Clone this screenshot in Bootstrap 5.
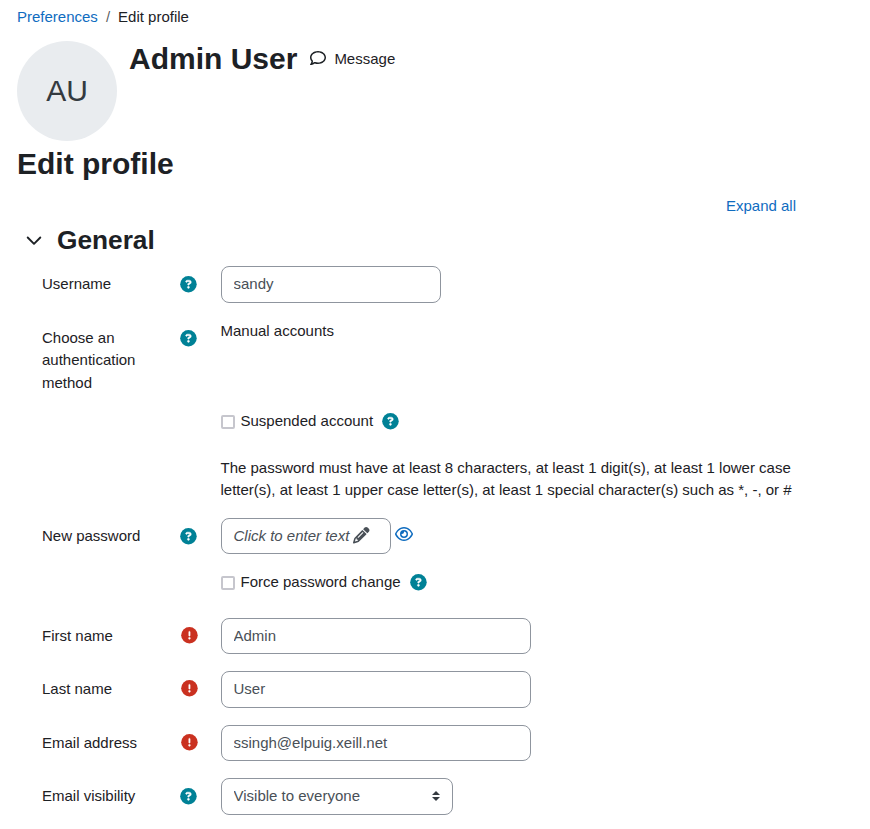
<!DOCTYPE html>
<html lang="en">
<head>
<meta charset="utf-8">
<meta name="viewport" content="width=device-width, initial-scale=1">
<title>Edit profile</title>
<link href="https://cdn.jsdelivr.net/npm/bootstrap@5.3.0/dist/css/bootstrap.min.css" rel="stylesheet">
<style>
body{font-family:"Liberation Sans",Arial,sans-serif;font-size:15px;line-height:1.5;color:#1d2125;overflow:hidden}
.page{padding:5.5px 0 0 17px;width:796px}
a{color:#0f6cbf;text-decoration:none}
.breadcrumb{--bs-breadcrumb-item-active-color:#1d2125;--bs-breadcrumb-font-size:15px;margin-bottom:13px}
.avatar{width:100px;height:100px;background:#e9ecef;color:#343a40;font-size:30px;padding-bottom:2px}
h1,h2,h3{font-weight:700;line-height:1.2;margin:0}
h1,h2{font-size:30px}
h2{padding-top:5px}
h3{font-size:26.25px}
svg{display:block;fill:currentColor;flex:none;overflow:visible}
symbol{overflow:visible}
.expand{padding-top:13px}
.section-head{padding:7px 0 10px 9px}
.section-head h3{padding-left:15px}
.help{color:#008196}
.req{color:#ca3120}
.field{display:flex;margin-bottom:17px;padding-left:25px}
.field-auth{margin-bottom:16px}
.field-suspended{margin-bottom:24px}
.field-rules{margin-bottom:16px}
.field-label{width:178.5px;display:flex;justify-content:space-between;align-items:flex-start;padding:7px 24px 0 0;flex:none}
.field-label span{width:110px}
.field-label svg{margin-top:3px}
.field-label .req{margin-right:-1px;margin-top:2px}
.inline-help{margin-left:9px}
.form-control,.form-select{font-size:15px;color:#495057;border-color:#8f959e;border-radius:8px;padding:6px 12px;height:36.5px}
.form-select{width:232px;background-image:url("data:image/svg+xml,%3csvg xmlns='http://www.w3.org/2000/svg' viewBox='0 0 4 5'%3e%3cpath fill='%23343a40' d='M2 0L0 2h4zm0 5L0 3h4z'/%3e%3c/svg%3e");background-size:8px 10px;background-position:right 12px center}
.snug{padding-top:5px;padding-bottom:7px}
.w-user{width:220px}
.w-name{width:310px}
.w-pass{width:170px}
.pencil{margin:-2px 0 0 4px}
.check{appearance:none;width:14px;height:14px;border:2px solid #c6c6cd;border-radius:2px;margin:2px 6px 0 0;background:#fff}
.msg-icon{margin:-2px 8px 0 1px}
</style>
<script src="https://cdn.jsdelivr.net/npm/bootstrap@5.3.0/dist/js/bootstrap.bundle.min.js"></script>
</head>
<body>
<svg class="d-none" xmlns="http://www.w3.org/2000/svg">
<symbol id="i-help" viewBox="0 0 512 512"><circle cx="262" cy="256" r="256"/><path transform="translate(6)" fill="#fff" stroke="#fff" stroke-width="14" d="M169.800 165.300c7.900-22.300 29.100-37.300 52.800-37.300h58.300c34.900 0 63.100 28.300 63.100 63.100c0 22.600-12.100 43.500-31.700 54.800L280 264.400c-.2 13-10.900 23.600-24 23.600c-13.300 0-24-10.700-24-24V250.500c0-8.600 4.600-16.500 12.100-20.800l44.300-25.400c4.700-2.700 7.600-7.700 7.600-13.100c0-8.400-6.800-15.100-15.100-15.100H222.600c-3.400 0-6.400 2.100-7.500 5.300l-.4 1.200c-4.400 12.500-18.200 19-30.600 14.600s-19-18.200-14.600-30.600zM224 352a32 32 0 1 1 64 0 32 32 0 1 1-64 0z"/></symbol>
<symbol id="i-req" viewBox="0 0 512 512"><circle cx="262" cy="256" r="256"/><path transform="translate(6)" fill="#fff" stroke="#fff" stroke-width="8" d="M256 128c13.300 0 24 10.700 24 24V264c0 13.300-10.700 24-24 24s-24-10.700-24-24V152c0-13.300 10.700-24 24-24zM224 352a32 32 0 1 1 64 0 32 32 0 1 1-64 0z"/></symbol>
</svg>
<main class="page">
  <nav aria-label="breadcrumb"><ol class="breadcrumb">
    <li class="breadcrumb-item"><a href="#">Preferences</a></li>
    <li class="breadcrumb-item active">Edit profile</li>
  </ol></nav>
  <header class="d-flex">
    <div class="avatar rounded-circle d-flex align-items-center justify-content-center">AU</div>
    <div class="d-flex align-items-center align-self-start ms-2 ps-1">
      <h1>Admin User</h1>
      <div class="d-flex align-items-center ms-2 ps-1">
        <svg class="msg-icon" width="16" height="16" viewBox="0 0 512 512"><path d="M123.600 391.300c12.900-9.400 29.600-11.800 44.600-6.400c26.500 9.600 56.200 15.100 87.800 15.100c124.700 0 208-80.500 208-160s-83.300-160-208-160S48 160.500 48 240c0 32 12.400 62.800 35.700 89.200c8.600 9.700 12.800 22.500 11.800 35.500c-1.400 18.100-5.700 34.700-11.300 49.400c17-7.900 31.100-16.700 39.400-22.800zM21.200 431.900c1.800-2.700 3.500-5.400 5.100-8.100c10-16.600 19.500-38.400 21.400-62.900C17.700 326.800 0 285.100 0 240C0 125.100 114.600 32 256 32s256 93.100 256 208s-114.600 208-256 208c-37.100 0-72.300-6.400-104.100-17.900c-11.900 8.700-31.300 20.600-54.300 30.600c-15.100 6.600-32.300 12.600-50.100 16.100c-.8.2-1.600.3-2.400.5c-4.400.8-8.700 1.500-13.200 1.900c-5.100.5-10.900.9-16 .9c-6.500 0-12.300-3.900-14.800-9.900c-2.500-6-1.100-12.800 3.400-17.400c4.100-4.200 7.800-8.700 11.300-13.500c1.700-2.300 3.300-4.600 4.800-6.900z"/></svg>
        <span>Message</span>
      </div>
    </div>
  </header>
  <h2>Edit profile</h2>
  <div class="text-end expand"><a href="#">Expand all</a></div>
  <div class="d-flex align-items-center section-head">
    <svg width="16" height="16" viewBox="0 0 16 16"><path d="M1.700 5.500 8 11.800 14.300 5.500" fill="none" stroke="currentColor" stroke-width="1.900" stroke-linecap="round" stroke-linejoin="round"/></svg>
    <h3>General</h3>
  </div>
  <form>
    <div class="field"><div class="field-label"><span>Username</span><svg class="help" width="16.5" height="16.5"><use href="#i-help"/></svg></div><input class="form-control w-user snug" value="sandy"></div>
    <div class="field field-auth"><div class="field-label"><span>Choose an authentication method</span><svg class="help" width="16.5" height="16.5"><use href="#i-help"/></svg></div><div>Manual accounts</div></div>
    <div class="field field-suspended"><div class="field-label pt-0"></div><label class="d-flex align-items-center"><input type="checkbox" class="check">Suspended account<svg class="help inline-help" width="16.5" height="16.5"><use href="#i-help"/></svg></label></div>
    <div class="field field-rules"><div class="field-label pt-0"></div><div>The password must have at least 8 characters, at least 1 digit(s), at least 1 lower case letter(s), at least 1 upper case letter(s), at least 1 special character(s) such as *, -, or #</div></div>
    <div class="field"><div class="field-label"><span>New password</span><svg class="help" width="16.5" height="16.5"><use href="#i-help"/></svg></div>
      <div class="form-control w-pass d-flex align-items-center"><em class="text-nowrap">Click to enter text</em><svg class="pencil" width="16.500" height="16.500" viewBox="0 0 512 512"><path d="M410.300 231l11.300-11.300-33.900-33.900-62.100-62.100L291.700 89.800l-11.300 11.300-22.600 22.600L58.600 322.900c-10.400 10.400-18 23.300-22.200 37.400L1 480.700c-2.500 8.400-.2 17.500 6.100 23.700s15.300 8.500 23.700 6.100l120.300-35.400c14.100-4.200 27-11.800 37.400-22.200L387.700 253.700zM160 399.400l-9.100 22.700c-4 3.100-8.500 5.400-13.300 6.900L59.400 452l23-78.100c1.400-4.900 3.800-9.400 6.900-13.300l22.700-9.100v32c0 8.800 7.200 16 16 16h32zM362.700 18.700L314.300 67.100l129.900 129.900 48.400-48.400c25-25 25-65.500 0-90.500L453.300 18.700c-25-25-65.500-25-90.500 0zm-47.400 168l-144 144c-6.200 6.200-16.400 6.200-22.600 0s-6.200-16.400 0-22.600l144-144c6.200-6.200 16.400-6.200 22.600 0s6.200 16.400 0 22.600z"/></svg></div>
      <a href="#" class="ms-1 mt-2"><svg width="18" height="16" viewBox="0 0 576 512"><path d="M288 80c-65.200 0-118.800 29.600-159.900 67.700C89.600 183.500 63 226 49.400 256c13.600 30 40.200 72.500 78.600 108.300C169.200 402.400 222.800 432 288 432s118.800-29.600 159.900-67.700C486.400 328.500 513 286 526.600 256c-13.600-30-40.200-72.500-78.600-108.300C406.800 109.600 353.200 80 288 80zM95.400 112.600C142.500 68.800 207.200 32 288 32s145.500 36.800 192.600 80.600c46.800 43.500 78.100 95.400 93 131.100c3.300 7.900 3.300 16.700 0 24.600c-14.900 35.700-46.200 87.700-93 131.100C433.500 443.200 368.800 480 288 480s-145.500-36.800-192.600-80.600C48.600 356 17.300 304 2.500 268.300c-3.300-7.900-3.300-16.700 0-24.600C17.300 208 48.600 156 95.400 112.600zM288 336c44.200 0 80-35.800 80-80s-35.800-80-80-80h-2c1.300 5.100 2 10.500 2 16c0 35.300-28.700 64-64 64c-5.500 0-10.900-.7-16-2v2c0 44.200 35.800 80 80 80zm0-208a128 128 0 1 1 0 256 128 128 0 1 1 0-256z"/></svg></a></div>
    <div class="field mb-4"><div class="field-label pt-0"></div><label class="d-flex align-items-center"><input type="checkbox" class="check">Force password change<svg class="help inline-help" width="16.5" height="16.5"><use href="#i-help"/></svg></label></div>
    <div class="field"><div class="field-label"><span>First name</span><svg class="req" width="16.5" height="16.5"><use href="#i-req"/></svg></div><input class="form-control w-name" value="Admin"></div>
    <div class="field"><div class="field-label"><span>Last name</span><svg class="req" width="16.5" height="16.5"><use href="#i-req"/></svg></div><input class="form-control w-name snug" value="User"></div>
    <div class="field"><div class="field-label"><span>Email address</span><svg class="req" width="16.5" height="16.5"><use href="#i-req"/></svg></div><input class="form-control w-name" value="ssingh@elpuig.xeill.net"></div>
    <div class="field"><div class="field-label"><span>Email visibility</span><svg class="help" width="16.5" height="16.5"><use href="#i-help"/></svg></div><select class="form-select"><option>Visible to everyone</option></select></div>
  </form>
</main>
</body>
</html>
